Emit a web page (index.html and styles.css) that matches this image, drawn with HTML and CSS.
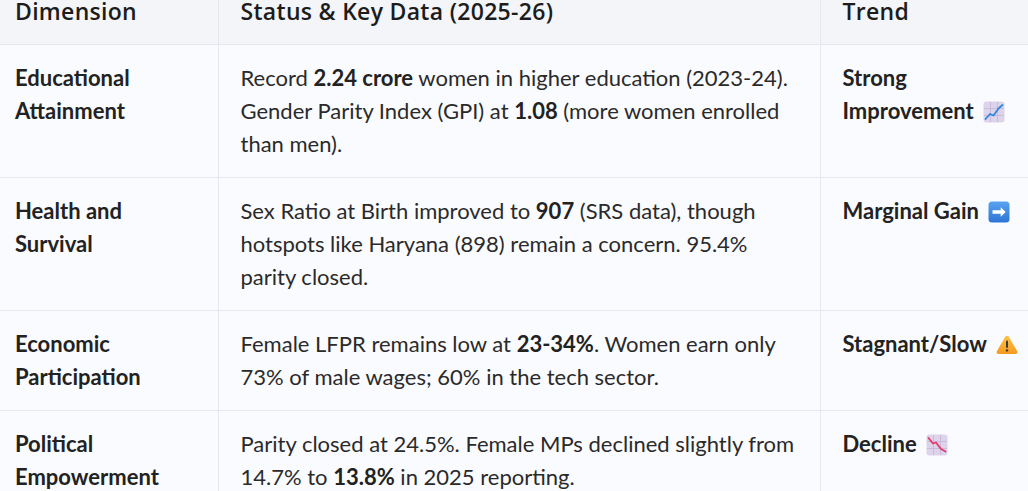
FILE: index.html
```html
<!DOCTYPE html>
<html lang="en">
<head>
<meta charset="utf-8">
<title>Gender Gap Dimensions</title>
<link rel="stylesheet" href="styles.css">
</head>
<body>
<div class="wrap">
<table class="gap-table">
  <colgroup>
    <col class="c-dim">
    <col class="c-status">
    <col class="c-trend">
  </colgroup>
  <thead>
    <tr>
      <th>Dimension</th>
      <th>Status &amp; Key Data (2025-26)</th>
      <th>Trend</th>
    </tr>
  </thead>
  <tbody>
    <tr>
      <td class="dim">Educational Attainment</td>
      <td>Record <strong>2.24 crore</strong> women in higher education (2023-24). Gender Parity Index (GPI) at <strong>1.08</strong> (more women enrolled than men).</td>
      <td class="trend">Strong Improvement <svg class="emo" viewBox="0 0 22 22" aria-label="chart increasing"><rect x="0.5" y="0.5" width="21" height="21" rx="3" fill="#ddd3ea"/><path d="M7.5 1v20M14.5 1v20M1 7.5h20M1 14.5h20" stroke="#c6b8d9" stroke-width="0.9"/><polyline points="2.5,18 7,13 10.5,14.5 15.5,7.5 19.5,4" fill="none" stroke="#2f86e0" stroke-width="1.8" stroke-linejoin="round" stroke-linecap="round"/></svg></td>
    </tr>
    <tr>
      <td class="dim">Health and Survival</td>
      <td>Sex Ratio at Birth improved to <strong>907</strong> (SRS data), though hotspots like Haryana (898) remain a concern. 95.4% parity closed.</td>
      <td class="trend">Marginal Gain <svg class="emo" viewBox="0 0 22 22" aria-label="right arrow"><defs><linearGradient id="gBlue" x1="0" y1="0" x2="0" y2="1"><stop offset="0" stop-color="#5aa3f0"/><stop offset="1" stop-color="#2f74d6"/></linearGradient></defs><rect x="0.5" y="0.5" width="21" height="21" rx="3.5" fill="url(#gBlue)"/><path d="M4.5 9.3h8.2V6.2l5 4.8-5 4.8v-3.1H4.5z" fill="#ffffff"/></svg></td>
    </tr>
    <tr>
      <td class="dim">Economic Participation</td>
      <td>Female LFPR remains low at <strong>23-34%</strong>. Women earn only 73% of male wages; 60% in the tech sector.</td>
      <td class="trend">Stagnant/Slow <svg class="emo warn" viewBox="0 0 22 19" aria-label="warning"><defs><linearGradient id="gOr" x1="0" y1="0" x2="0" y2="1"><stop offset="0" stop-color="#ffc247"/><stop offset="1" stop-color="#f59a1f"/></linearGradient></defs><path d="M9.2 1.8c0.8-1.4 2.8-1.4 3.6 0l8.4 14.4c0.8 1.4-0.2 2.8-1.8 2.8H2.6c-1.6 0-2.6-1.4-1.8-2.8z" fill="url(#gOr)"/><rect x="10" y="5.6" width="2" height="7.4" rx="1" fill="#3b3b3b"/><circle cx="11" cy="15.4" r="1.2" fill="#3b3b3b"/></svg></td>
    </tr>
    <tr>
      <td class="dim">Political Empowerment</td>
      <td>Parity closed at 24.5%. Female MPs declined slightly from 14.7% to <strong>13.8%</strong> in 2025 reporting.</td>
      <td class="trend">Decline <svg class="emo" viewBox="0 0 22 22" aria-label="chart decreasing"><rect x="0.5" y="0.5" width="21" height="21" rx="3" fill="#ddd3ea"/><path d="M7.5 1v20M14.5 1v20M1 7.5h20M1 14.5h20" stroke="#c6b8d9" stroke-width="0.9"/><polyline points="2.5,4 7,9.5 10,8.5 15,15 19.5,17.5" fill="none" stroke="#e8386b" stroke-width="1.8" stroke-linejoin="round" stroke-linecap="round"/></svg></td>
    </tr>
  </tbody>
</table>
</div>
</body>
</html>
```

FILE: styles.css
```css
html, body {
  margin: 0;
  padding: 0;
  background: #fafbfe;
  overflow: hidden;
}

.wrap {
  margin-top: -21px;
  margin-left: -7px;
}

.gap-table {
  border-collapse: collapse;
  table-layout: fixed;
  width: 1066px;
  font-family: "Lato", "Noto Sans", sans-serif;
  font-size: 22px;
  color: #2a2a2a;
  background: #fafbfe;
}

.c-dim { width: 225px; }
.c-status { width: 602px; }
.c-trend { width: 239px; }

.gap-table th {
  background: #f4f5f9;
  font-family: "Open Sans", "Noto Sans", sans-serif;
  font-weight: 600;
  font-size: 23px;
  letter-spacing: 0.3px;
  line-height: 33px;
  color: #1c1c1c;
  text-align: left;
  padding: 16px 22px;
  border-bottom: 1px solid #e7e8ed;
  border-right: 1px solid #e7e8ed;
}

.gap-table td {
  line-height: 33px;
  padding: 16px 22px 17px;
  vertical-align: top;
  border-bottom: 1px solid #e7e8ed;
  border-right: 1px solid #e7e8ed;
}

.gap-table td.dim,
.gap-table td.trend {
  font-weight: 700;
  color: #222222;
}

.gap-table strong {
  font-weight: 700;
  color: #222222;
}

.emo {
  display: inline-block;
  width: 22px;
  height: 22px;
  margin-left: 4px;
  vertical-align: -4px;
}

.emo.warn {
  height: 19px;
  vertical-align: -2px;
}
```
